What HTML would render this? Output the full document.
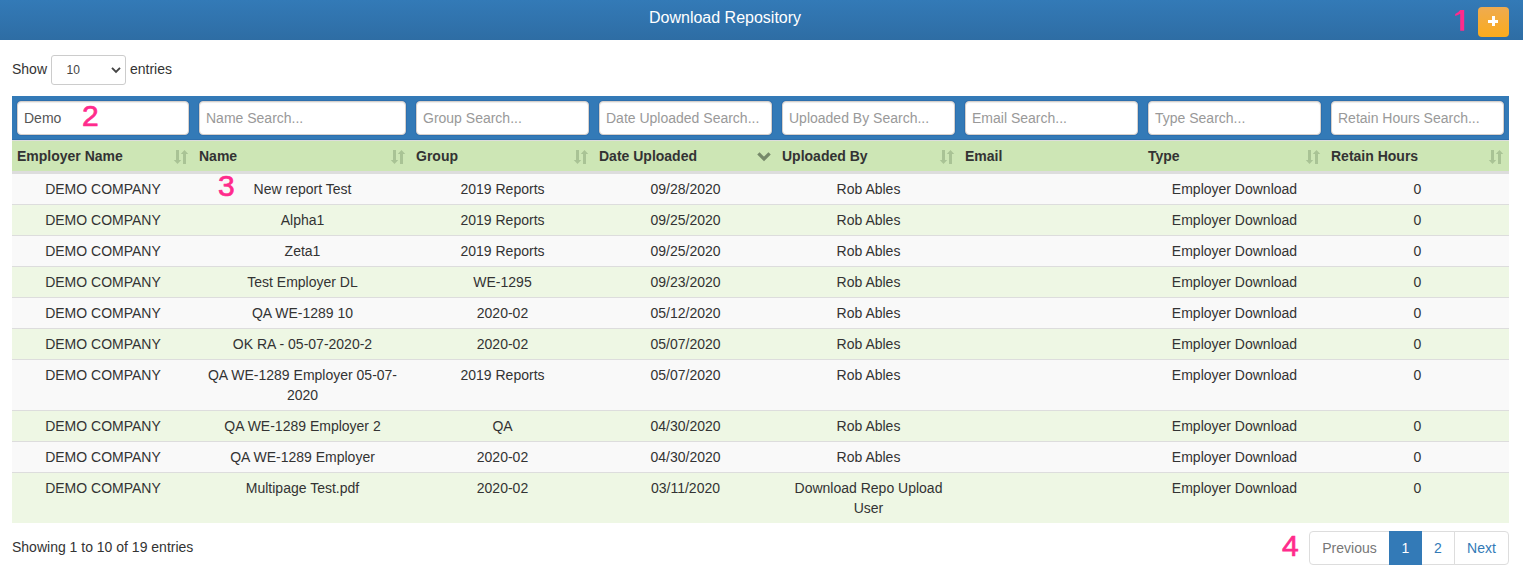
<!DOCTYPE html>
<html><head><meta charset="utf-8">
<style>
*{box-sizing:border-box;margin:0;padding:0}
html,body{width:1523px;height:582px;overflow:hidden;background:#fff}
body{font-family:"Liberation Sans",sans-serif;font-size:14px;line-height:20px;color:#333;position:relative}
.hdr{position:absolute;left:0;top:0;width:1523px;height:40px;background:linear-gradient(to bottom,#337ab7 0,#2e6da4 100%);color:#fff;text-align:left;font-size:16px;line-height:20px;padding-top:8px;padding-left:649px}
.addbtn{position:absolute;left:1478px;top:7px;width:31px;height:30px;border-radius:4px;background:linear-gradient(to bottom,#efab50 0,#fbab1c 100%);}
.addbtn:before{content:"";position:absolute;left:10px;top:12.5px;width:10px;height:3px;background:#fff}
.addbtn:after{content:"";position:absolute;left:13.5px;top:8.5px;width:3.2px;height:10px;background:#fff}
.anno{position:absolute;color:#ff2b8c;font-size:30px;line-height:30px;-webkit-text-stroke:0.7px #ff2b8c}
.len{position:absolute;left:12px;top:59px;font-size:14px;line-height:20px}
.sel{position:absolute;left:51px;top:55px;width:75px;height:30px;border:1px solid #ccc;border-radius:3px;background:#fff;font-size:12px;padding-left:14.5px;line-height:28px;color:#444}
.sel svg{position:absolute;right:3px;top:10px}
.entries{position:absolute;left:130px;top:59px}
table{position:absolute;left:12px;top:96px;width:1497px;border-collapse:collapse;table-layout:fixed}
tr.filt th{background:#337ab7;padding:5px;height:44px;box-shadow:inset 0 -1px 0 #2e6fad}
.inp{height:34px;background:#fff;border:1px solid #d6d0cb;box-shadow:0 0 0 1px #2e6fad,inset 0 1px 1px rgba(0,0,0,.075);border-radius:4px;font-size:14px;line-height:20px;padding:6px 6px;color:#999;font-weight:normal;text-align:left;white-space:nowrap;overflow:hidden}
.inp.v{color:#555}
tr.heads th{background:#cde6b5;border-top:1px solid #ddd;border-bottom:3px solid #ddd;height:32px;padding:5px;text-align:left;font-weight:bold;position:relative;vertical-align:bottom}
.si{position:absolute;right:5px;top:8px}
td{text-align:center;padding:5px;border-top:1px solid #ddd;vertical-align:top}
tbody tr:nth-child(odd) td{background:#f9f9f9}
tbody tr:nth-child(even) td{background:#eef7e4}
.info{position:absolute;left:12px;top:537px}
.pag{position:absolute;left:1309px;top:531px;height:34px;display:flex}
.pag div{height:34px;border:1px solid #ddd;margin-left:-1px;padding:6px 0;text-align:center;line-height:20px;color:#337ab7;background:#fff}
.pag div.first{margin-left:0;border-radius:4px 0 0 4px;color:#777}
.pag div.last{border-radius:0 4px 4px 0}
.pag div.act{background:#337ab7;border-color:#337ab7;color:#fff;position:relative;z-index:2}
</style></head><body>
<div class="hdr">Download Repository</div>
<svg style="position:absolute;left:1450px;top:5px" width="20" height="30" viewBox="0 0 20 30"><path fill="#ff2b8c" d="M10.2 5 H14.2 V25.8 H10.2 V8.8 Q8.2 10.4 5.2 11 V9 Q8.6 7.6 10.2 5Z"/></svg>
<div class="addbtn"></div>
<div class="len">Show</div>
<div class="sel">10<svg width="12" height="8" viewBox="0 0 12 8"><path d="M2 1.8 L6 5.8 L10 1.8" stroke="#444" stroke-width="1.9" fill="none"/></svg></div>
<div class="entries">entries</div>
<table>
<colgroup><col style="width:182px"><col style="width:217px"><col style="width:183px"><col style="width:183px"><col style="width:183px"><col style="width:183px"><col style="width:183px"><col style="width:183px"></colgroup>
<thead>
<tr class="filt">
<th><div class="inp v">Demo</div></th>
<th><div class="inp">Name Search...</div></th>
<th><div class="inp">Group Search...</div></th>
<th><div class="inp">Date Uploaded Search...</div></th>
<th><div class="inp">Uploaded By Search...</div></th>
<th><div class="inp">Email Search...</div></th>
<th><div class="inp">Type Search...</div></th>
<th><div class="inp">Retain Hours Search...</div></th>
</tr>
<tr class="heads">
<th>Employer Name<svg class="si" width="16" height="16" viewBox="0 0 16 16"><path fill="#a9c395" d="M3 1h3v10h2.2L4.5 15 0.8 11H3z M10 15h3V5h2.2L11.5 1 7.8 5H10z"/></svg></th>
<th>Name<svg class="si" width="16" height="16" viewBox="0 0 16 16"><path fill="#a9c395" d="M3 1h3v10h2.2L4.5 15 0.8 11H3z M10 15h3V5h2.2L11.5 1 7.8 5H10z"/></svg></th>
<th>Group<svg class="si" width="16" height="16" viewBox="0 0 16 16"><path fill="#a9c395" d="M3 1h3v10h2.2L4.5 15 0.8 11H3z M10 15h3V5h2.2L11.5 1 7.8 5H10z"/></svg></th>
<th>Date Uploaded<svg class="si" width="16" height="16" viewBox="0 0 16 16"><path fill="none" stroke="#76896a" stroke-width="3.3" d="M2.4 4.4 L8 10 L13.6 4.4"/></svg></th>
<th>Uploaded By<svg class="si" width="16" height="16" viewBox="0 0 16 16"><path fill="#a9c395" d="M3 1h3v10h2.2L4.5 15 0.8 11H3z M10 15h3V5h2.2L11.5 1 7.8 5H10z"/></svg></th>
<th>Email</th>
<th>Type<svg class="si" width="16" height="16" viewBox="0 0 16 16"><path fill="#a9c395" d="M3 1h3v10h2.2L4.5 15 0.8 11H3z M10 15h3V5h2.2L11.5 1 7.8 5H10z"/></svg></th>
<th>Retain Hours<svg class="si" width="16" height="16" viewBox="0 0 16 16"><path fill="#a9c395" d="M3 1h3v10h2.2L4.5 15 0.8 11H3z M10 15h3V5h2.2L11.5 1 7.8 5H10z"/></svg></th>
</tr>
</thead>
<tbody>
<tr><td>DEMO COMPANY</td><td>New report Test</td><td>2019 Reports</td><td>09/28/2020</td><td>Rob Ables</td><td></td><td>Employer Download</td><td>0</td></tr>
<tr><td>DEMO COMPANY</td><td>Alpha1</td><td>2019 Reports</td><td>09/25/2020</td><td>Rob Ables</td><td></td><td>Employer Download</td><td>0</td></tr>
<tr><td>DEMO COMPANY</td><td>Zeta1</td><td>2019 Reports</td><td>09/25/2020</td><td>Rob Ables</td><td></td><td>Employer Download</td><td>0</td></tr>
<tr><td>DEMO COMPANY</td><td>Test Employer DL</td><td>WE-1295</td><td>09/23/2020</td><td>Rob Ables</td><td></td><td>Employer Download</td><td>0</td></tr>
<tr><td>DEMO COMPANY</td><td>QA WE-1289 10</td><td>2020-02</td><td>05/12/2020</td><td>Rob Ables</td><td></td><td>Employer Download</td><td>0</td></tr>
<tr><td>DEMO COMPANY</td><td>OK RA - 05-07-2020-2</td><td>2020-02</td><td>05/07/2020</td><td>Rob Ables</td><td></td><td>Employer Download</td><td>0</td></tr>
<tr><td>DEMO COMPANY</td><td>QA WE-1289 Employer 05-07-2020</td><td>2019 Reports</td><td>05/07/2020</td><td>Rob Ables</td><td></td><td>Employer Download</td><td>0</td></tr>
<tr><td>DEMO COMPANY</td><td>QA WE-1289 Employer 2</td><td>QA</td><td>04/30/2020</td><td>Rob Ables</td><td></td><td>Employer Download</td><td>0</td></tr>
<tr><td>DEMO COMPANY</td><td>QA WE-1289 Employer</td><td>2020-02</td><td>04/30/2020</td><td>Rob Ables</td><td></td><td>Employer Download</td><td>0</td></tr>
<tr><td>DEMO COMPANY</td><td>Multipage Test.pdf</td><td>2020-02</td><td>03/11/2020</td><td>Download Repo Upload User</td><td></td><td>Employer Download</td><td>0</td></tr>
</tbody>
</table>
<div class="anno" style="left:82px;top:101px">2</div>
<div class="anno" style="left:218px;top:171px">3</div>
<div class="info">Showing 1 to 10 of 19 entries</div>
<div class="anno" style="left:1282px;top:531px">4</div>
<div class="pag"><div class="first" style="width:81px">Previous</div><div class="act" style="width:33px">1</div><div style="width:34px">2</div><div class="last" style="width:55px">Next</div></div>
</body></html>
